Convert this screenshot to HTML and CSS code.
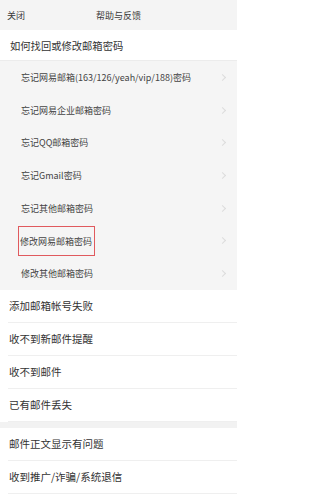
FILE: index.html
```html
<!DOCTYPE html>
<html lang="zh">
<head>
<meta charset="utf-8">
<link rel="stylesheet" href="styles.css">
</head>
<body>
<div class="page">
  <header class="topbar">
    <span class="close">关闭</span>
    <span class="title">帮助与反馈</span>
  </header>
  <div class="section-title">如何找回或修改邮箱密码</div>
  <ul class="sublist">
    <li class="sub"><span class="label">忘记网易邮箱(163/126/yeah/vip/188)密码</span><span class="chev"></span></li>
    <li class="sub"><span class="label">忘记网易企业邮箱密码</span><span class="chev"></span></li>
    <li class="sub"><span class="label">忘记QQ邮箱密码</span><span class="chev"></span></li>
    <li class="sub"><span class="label">忘记Gmail密码</span><span class="chev"></span></li>
    <li class="sub"><span class="label">忘记其他邮箱密码</span><span class="chev"></span></li>
    <li class="sub"><span class="label boxed">修改网易邮箱密码</span><span class="chev"></span></li>
    <li class="sub"><span class="label">修改其他邮箱密码</span><span class="chev"></span></li>
  </ul>
  <ul class="group">
    <li class="item">添加邮箱帐号失败</li>
    <li class="item">收不到新邮件提醒</li>
    <li class="item">收不到邮件</li>
    <li class="item">已有邮件丢失</li>
  </ul>
  <ul class="group gap">
    <li class="item">邮件正文显示有问题</li>
    <li class="item">收到推广/诈骗/系统退信</li>
  </ul>
</div>
</body>
</html>
```

FILE: styles.css
```css
* { box-sizing: border-box; }
html, body { margin: 0; padding: 0; }
body {
  font-family: "Noto Sans CJK SC", "Noto Sans", sans-serif;
  background: #ffffff;
  color: #333;
  width: 237px;
  overflow: hidden;
}
ul { list-style: none; margin: 0; padding: 0; }

.topbar {
  height: 30px;
  background: #f4f4f4;
  display: flex;
  align-items: center;
  position: relative;
  padding-left: 7px;
  font-size: 9px;
  color: #3a3a3a;
}
.topbar .title {
  position: absolute;
  left: 0;
  right: 0;
  text-align: center;
  pointer-events: none;
}

.section-title {
  height: 31px;
  display: flex;
  align-items: center;
  padding-left: 10px;
  font-size: 10.3px;
  color: #333;
  background: #fff;
  border-bottom: 1px solid #ececec;
}

.sublist { background: #f5f5f5; }
.sub {
  height: 32.7px;
  display: flex;
  align-items: center;
  justify-content: space-between;
  padding-left: 21px;
  padding-right: 10px;
  font-size: 9px;
  color: #444;
}
.sub .label.boxed {
  outline: 1px solid #e05a5e;
  outline-offset: 0;
  padding: 8px 2px 7px 1px;
  margin-left: -2px;
}
.chev {
  width: 5px;
  height: 5px;
  border-top: 1px solid #dcdcdc;
  border-right: 1px solid #dcdcdc;
  transform: rotate(45deg);
  margin-right: 2px;
}

.group { background: #fff; padding-left: 8px; }
.group.gap { border-top: 6px solid #f2f2f2; }
.item {
  height: 33px;
  display: flex;
  align-items: center;
  padding-left: 1px;
  font-size: 10.5px;
  color: #333;
  border-bottom: 1px solid #efefef;
}
.group:first-of-type .item:last-child { border-bottom: none; }
```
